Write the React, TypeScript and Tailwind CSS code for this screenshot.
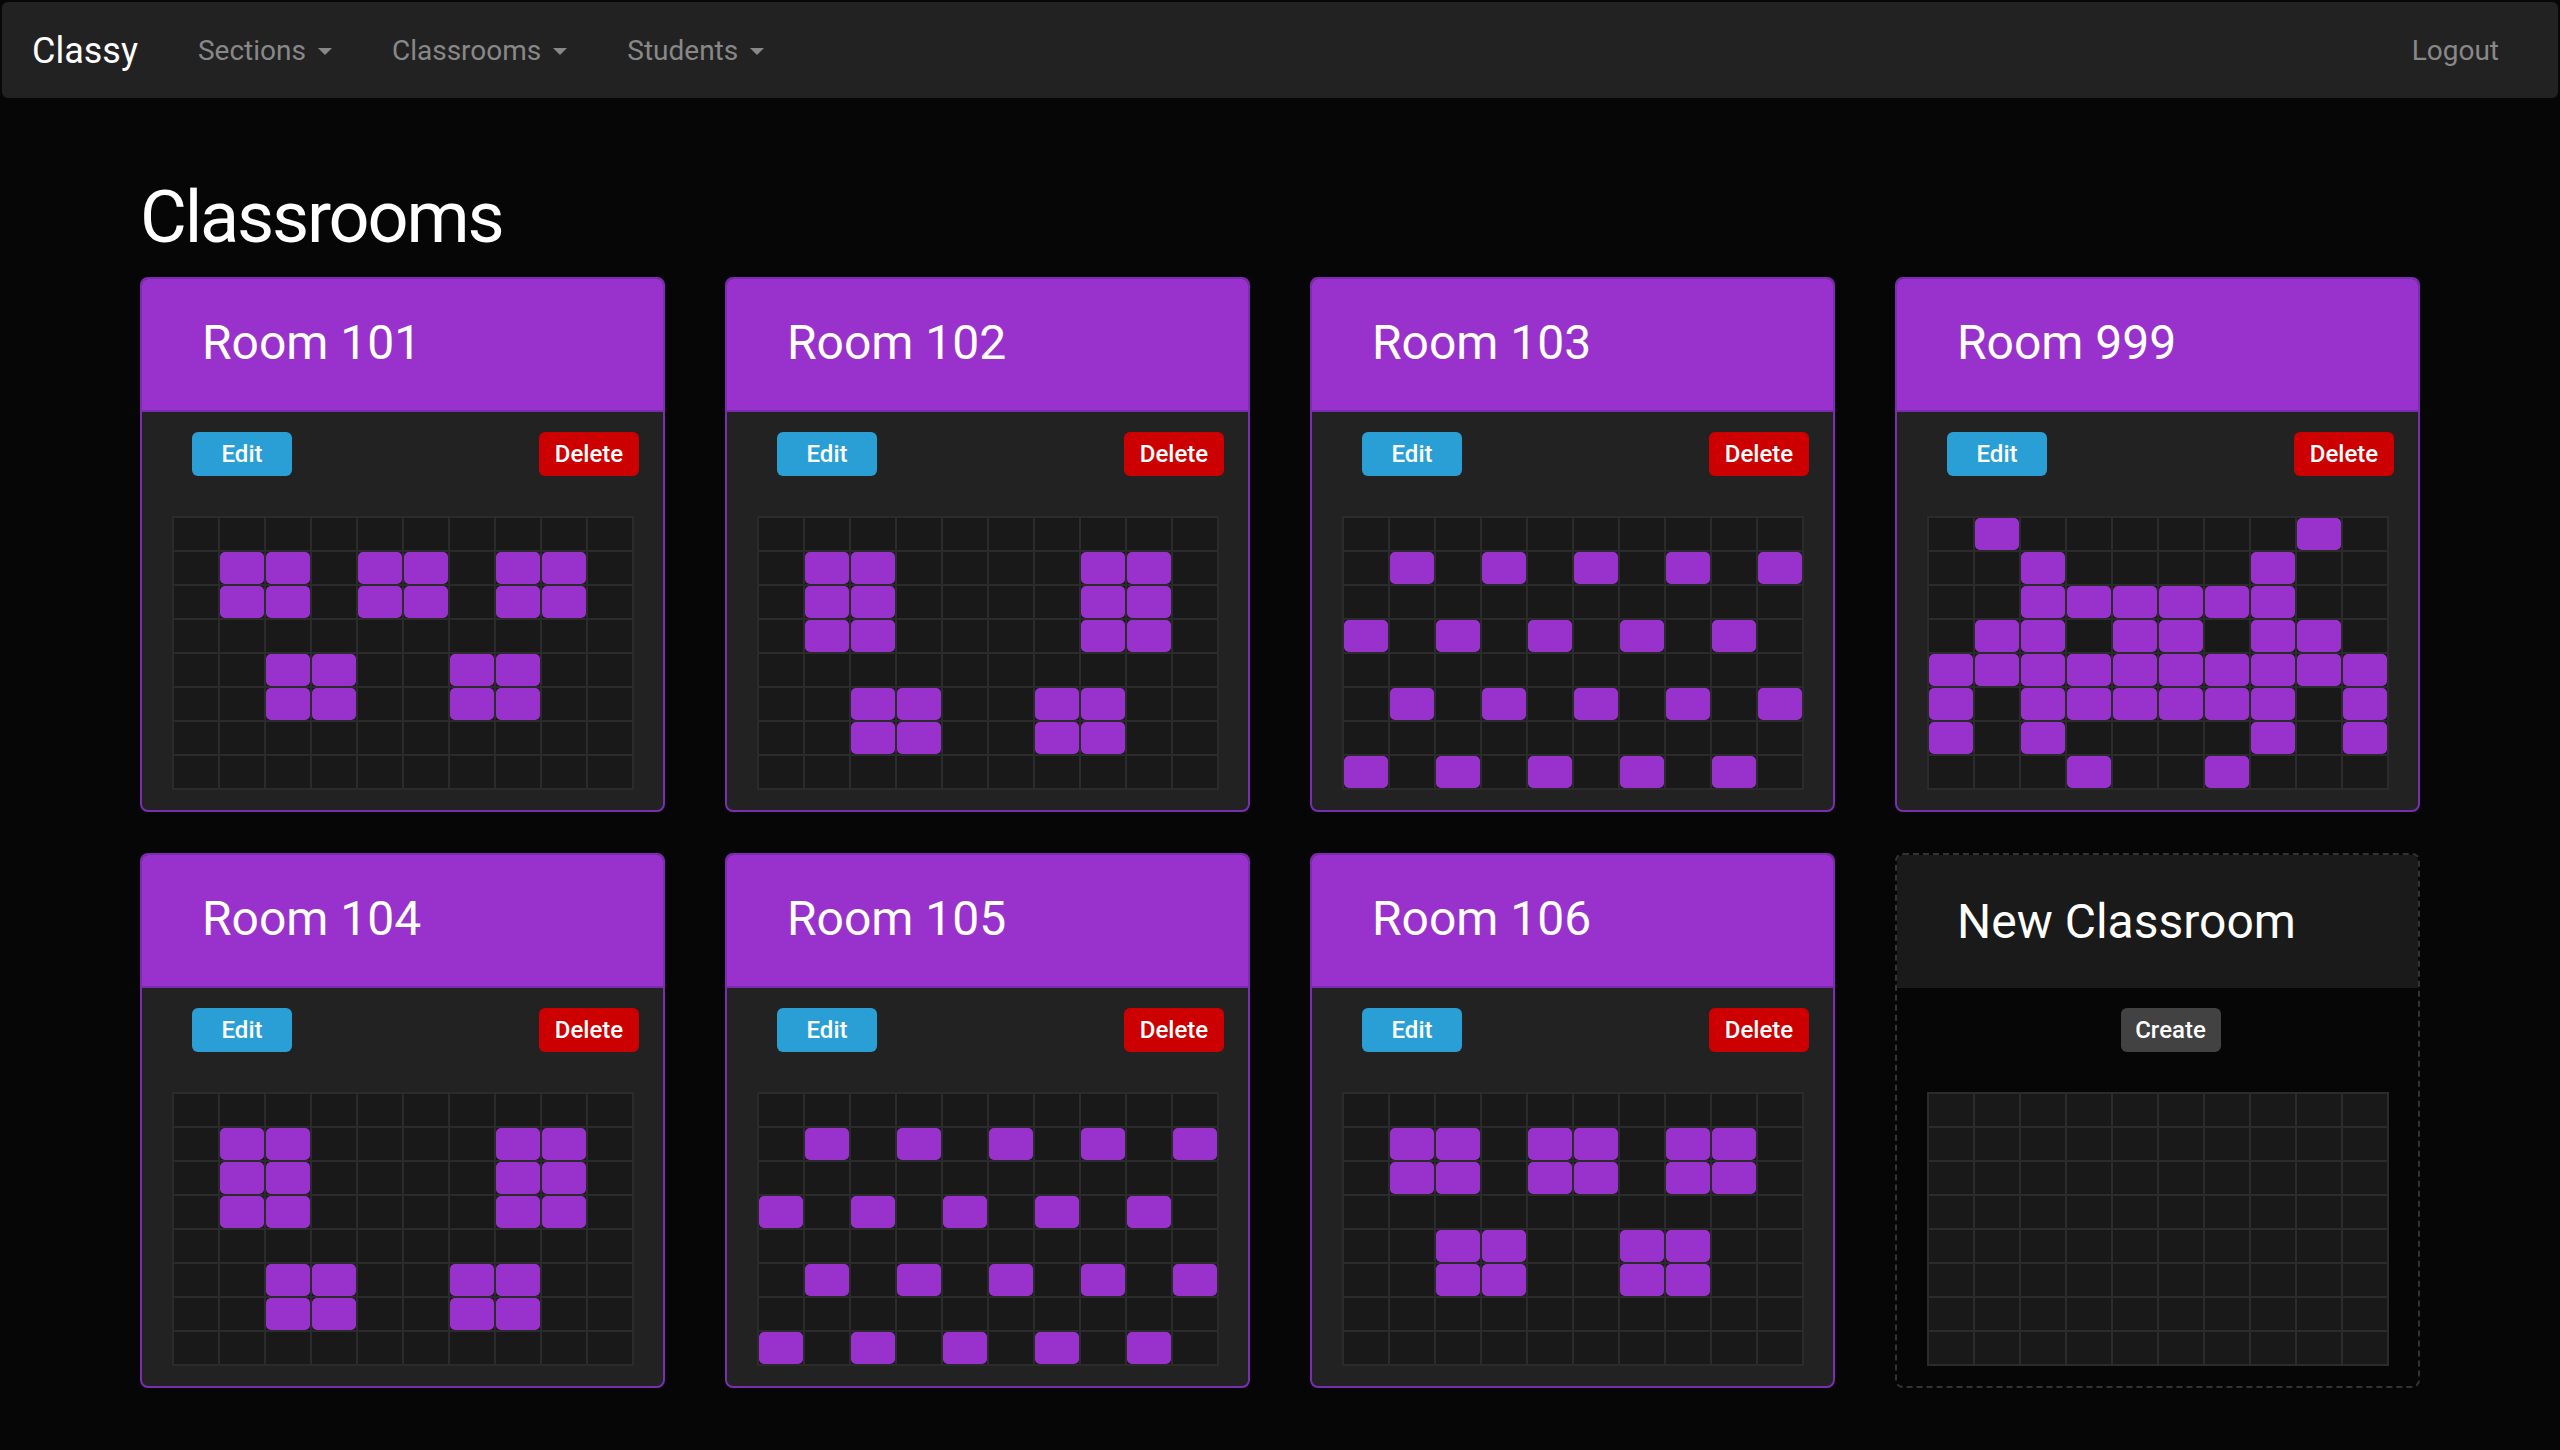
import React from "react";

const A = [
  "..........",
  ".XX.XX.XX.",
  ".XX.XX.XX.",
  "..........",
  "..XX..XX..",
  "..XX..XX..",
  "..........",
  "..........",
];
const B = [
  "..........",
  ".XX....XX.",
  ".XX....XX.",
  ".XX....XX.",
  "..........",
  "..XX..XX..",
  "..XX..XX..",
  "..........",
];
const C = [
  "..........",
  ".X.X.X.X.X",
  "..........",
  "X.X.X.X.X.",
  "..........",
  ".X.X.X.X.X",
  "..........",
  "X.X.X.X.X.",
];
const D = [
  ".X......X.",
  "..X....X..",
  "..XXXXXX..",
  ".XX.XX.XX.",
  "XXXXXXXXXX",
  "X.XXXXXX.X",
  "X.X....X.X",
  "...X..X...",
];
const EMPTY = Array.from({ length: 8 }, () => "..........");

const rooms = [
  { name: "Room 101", layout: A },
  { name: "Room 102", layout: B },
  { name: "Room 103", layout: C },
  { name: "Room 999", layout: D },
  { name: "Room 104", layout: B },
  { name: "Room 105", layout: C },
  { name: "Room 106", layout: A },
];

function SeatGrid({ layout }: { layout: string[] }) {
  const cells: boolean[] = [];
  layout.forEach((row) => row.split("").forEach((c) => cells.push(c === "X")));
  return (
    <div className="mx-auto grid w-fit grid-cols-[repeat(10,44px)] grid-rows-[repeat(8,32px)] gap-[2px] bg-[#2b2b2b] p-[2px]">
      {cells.map((on, i) => (
        <div key={i} className="bg-[#191919]">
          {on && <div className="h-full w-full rounded-[5px] bg-[#9932cc]" />}
        </div>
      ))}
    </div>
  );
}

function Btn({ label, color }: { label: string; color: string }) {
  return (
    <button className={`flex h-[44px] w-[100px] items-center justify-center rounded-[6px] text-[24px] font-medium leading-none text-white ${color}`}>
      {label}
    </button>
  );
}

function RoomCard({ name, layout }: { name: string; layout: string[] }) {
  return (
    <div className="overflow-hidden rounded-[8px] border-2 border-[#7b2db0] bg-[#222222]">
      <div className="flex h-[133px] items-center border-b-2 border-[#7b2db0] bg-[#9932cc] pb-[4px] pl-[60px]">
        <h3 className="text-[48px] font-normal leading-none text-white">{name}</h3>
      </div>
      <div className="flex justify-between pl-[50px] pr-[24px] pt-[20px]">
        <Btn label="Edit" color="bg-[#2a9fd6]" />
        <Btn label="Delete" color="bg-[#cc0000]" />
      </div>
      <div className="pb-[20px] pt-[40px]">
        <SeatGrid layout={layout} />
      </div>
    </div>
  );
}

function NewCard() {
  return (
    <div className="overflow-hidden rounded-[8px] border-2 border-dashed border-[#333333]">
      <div className="flex h-[133px] items-center bg-[#1a1a1a] pl-[60px]">
        <h3 className="text-[48px] font-normal leading-none text-white">New Classroom</h3>
      </div>
      <div className="flex justify-center pl-[50px] pr-[24px] pt-[20px]">
        <Btn label="Create" color="bg-[#424242]" />
      </div>
      <div className="pb-[20px] pt-[40px]">
        <SeatGrid layout={EMPTY} />
      </div>
    </div>
  );
}

function Caret() {
  return <span className="ml-[12px] inline-block h-0 w-0 border-l-[7px] border-r-[7px] border-t-[7px] border-l-transparent border-r-transparent border-t-[#888888]" />;
}

export default function App() {
  return (
    <div className="min-h-[1450px] bg-[#060606] font-['Roboto','Noto_Sans',sans-serif]">
      <nav className="flex h-[100px] items-center rounded-[8px] border-2 border-[#080808] bg-[#222222] pt-[2px]">
        <span className="pl-[30px] pr-[30px] text-[36px] leading-none text-white">Classy</span>
        {["Sections", "Classrooms", "Students"].map((t) => (
          <span key={t} className="flex items-center px-[30px] text-[28px] leading-none text-[#888888]">
            {t}
            <Caret />
          </span>
        ))}
        <span className="ml-auto pr-[59px] text-[28px] leading-none text-[#888888]">Logout</span>
      </nav>
      <main className="mx-auto w-[2340px] px-[30px] pt-[78px]">
        <h1 className="mb-[20px] text-[72px] font-normal leading-[79px] tracking-[-0.03em] text-white">Classrooms</h1>
        <div className="grid grid-cols-4 gap-x-[60px] gap-y-[41px]">
          {rooms.map((r) => (
            <RoomCard key={r.name} name={r.name} layout={r.layout} />
          ))}
          <NewCard />
        </div>
      </main>
    </div>
  );
}
